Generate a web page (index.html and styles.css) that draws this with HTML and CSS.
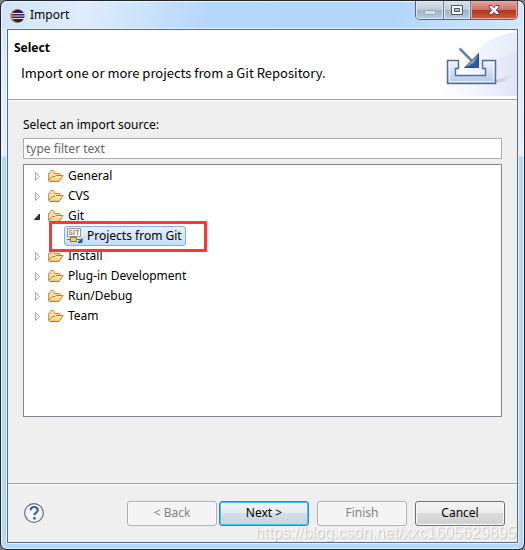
FILE: index.html
```html
<!DOCTYPE html>
<html lang="en">
<head>
  <meta charset="UTF-8">
  <title>Import</title>
  <link rel="stylesheet" href="styles.css">
</head>
<body>
  <!-- shapes shared by the tree rows -->
  <svg class="defs" aria-hidden="true">
    <defs>
      <linearGradient id="folder-front" x1="0" y1="0" x2="0" y2="1">
        <stop offset="0" stop-color="#fff3cd"/>
        <stop offset="1" stop-color="#f3c56c"/>
      </linearGradient>
      <symbol id="folder" viewBox="0 0 16 16">
        <path d="M.5 12V5.500h1.500v-2L3 2.500h2.500l1 1v2h5.500V8" fill="#f9dea0" stroke="#c99549"/>
        <path d="M.5 12.500L4.500 8.500H7l1-1h7L11 13.500H1.500z" fill="url(#folder-front)" stroke="#b87a2b"/>
      </symbol>
      <symbol id="closed" viewBox="0 0 7 9">
        <path d="M1.500 .5v8L5.500 4.500z" fill="#fff" stroke="#a6a6a6"/>
      </symbol>
      <symbol id="open" viewBox="0 0 7 9">
        <path d="M5.500 2v5.500H.5z" fill="#404040" stroke="#262626"/>
      </symbol>
    </defs>
  </svg>

  <div class="window">
    <div class="titlebar">
      <svg class="app-icon" viewBox="0 0 15 14" aria-hidden="true">
        <circle cx="7" cy="7" r="7" fill="#f0922e"/>
        <circle cx="8" cy="7" r="6.500" fill="#2c2255"/>
        <path d="M2 4.500h12M1.500 7h13M2 9.500h12" stroke="#e6e2f3"/>
      </svg>
      <span class="title">Import</span>
      <div class="window-buttons">
        <button class="win-btn minimize" aria-label="Minimize">
          <svg width="12" height="5" viewBox="0 0 12 5"><rect x=".5" y=".5" width="11" height="4" rx="1" fill="#d6e0e9" stroke="#98a8b8"/></svg>
        </button>
        <button class="win-btn maximize" aria-label="Maximize">
          <svg width="12" height="10" viewBox="0 0 12 10"><path d="M.5.5h11v9H.5zM3.500 3.500v3h5v-3z" fill="#fff" fill-rule="evenodd" stroke="#4e5767"/></svg>
        </button>
        <button class="win-btn close" aria-label="Close">
          <svg width="12" height="10" viewBox="0 0 12 10"><path d="M1 .5h3l2 2.200L8 .5h3v1.500L8.300 5l2.700 3v1.500H8L6 7.300 4 9.500H1V8l2.700-3L1 2z" fill="#fff" stroke="#5c4650"/></svg>
        </button>
      </div>
    </div>

    <div class="content">
      <div class="banner">
        <div class="banner-text">
          <h1>Select</h1>
          <p>Import one or more projects from a Git Repository.</p>
        </div>
        <svg class="banner-image" viewBox="0 0 84 66" aria-hidden="true">
          <defs>
            <linearGradient id="sweep" x1="0" y1="0" x2="1" y2="0">
              <stop offset="0" stop-color="#fff"/>
              <stop offset="1" stop-color="#dbe2f5"/>
            </linearGradient>
            <linearGradient id="tray" x1="0" y1="0" x2="0" y2="1">
              <stop offset="0" stop-color="#f0f4fb"/>
              <stop offset="1" stop-color="#b7c5df"/>
            </linearGradient>
            <linearGradient id="shade" x1="0" y1="0" x2="1" y2="0">
              <stop offset="0" stop-color="#b9a9b5"/>
              <stop offset="1" stop-color="#e2e5f4"/>
            </linearGradient>
          </defs>
          <path d="M0 66C30 62 30 8 84 2v64z" fill="url(#sweep)" opacity=".65"/>
          <path d="M20 66C48 60 42 28 84 22v44z" fill="url(#sweep)" opacity=".7"/>
          <circle cx="38" cy="30" r="8" fill="#fffbd7" opacity=".8"/>
          <path d="M63 53V50l17-6-7 7z" fill="url(#shade)" opacity=".55"/>
          <path d="M14.500 30.500h11v8h-3v7h30v-7h-3v-8h13v23h-48z" fill="url(#tray)" stroke="#4871a8" stroke-width="1.500"/>
          <path d="M16.500 32.500h7M16.500 32.500v19h44v-19h-9" fill="none" stroke="#fff" opacity=".8"/>
          <path d="M26.500 18.500l13 13" stroke="#6482b4" stroke-width="2.500"/>
          <path d="M45.500 23.500v14h-14z" fill="#315b99" stroke="#284a80"/>
          <path d="M31.500 37.500L41 33l4.500-9.500-6 6z" fill="#7f9cc8"/>
        </svg>
      </div>

      <div class="main">
        <label for="filter">Select an import source:</label>
        <input class="filter" id="filter" type="text" placeholder="type filter text">
        <ul class="tree">
          <li class="row"><svg class="arrow"><use href="#closed"/></svg><svg class="icon"><use href="#folder"/></svg><span>General</span></li>
          <li class="row"><svg class="arrow"><use href="#closed"/></svg><svg class="icon"><use href="#folder"/></svg><span>CVS</span></li>
          <li>
            <div class="row"><svg class="arrow"><use href="#open"/></svg><svg class="icon"><use href="#folder"/></svg><span>Git</span></div>
            <ul class="children">
              <li class="row selected">
                <svg class="icon" viewBox="0 0 16 16">
                  <rect x=".5" y=".5" width="13" height="8" fill="#f7f8f5" stroke="#9b9c8f"/>
                  <path d="M5 2.500H2.500v4H5V4.500H4" fill="none" stroke="#b98078"/>
                  <path d="M7 2v5" stroke="#7b7b7b"/>
                  <path d="M8.500 2.500H12M10.500 2.500V7" fill="none" stroke="#6ba176"/>
                  <path d="M0 11.500h13" stroke="#7c7044"/>
                  <path d="M3.500 9.500h6v4h-6z" fill="#f2d45c" stroke="#8d7426"/>
                  <path d="M15 10.500V14.500H11z" fill="#27548f" stroke="#27548f"/>
                </svg>
                <span>Projects from Git</span>
              </li>
            </ul>
          </li>
          <li class="row"><svg class="arrow"><use href="#closed"/></svg><svg class="icon"><use href="#folder"/></svg><span>Install</span></li>
          <li class="row"><svg class="arrow"><use href="#closed"/></svg><svg class="icon"><use href="#folder"/></svg><span>Plug-in Development</span></li>
          <li class="row"><svg class="arrow"><use href="#closed"/></svg><svg class="icon"><use href="#folder"/></svg><span>Run/Debug</span></li>
          <li class="row"><svg class="arrow"><use href="#closed"/></svg><svg class="icon"><use href="#folder"/></svg><span>Team</span></li>
        </ul>
      </div>

      <div class="footer">
        <button class="help" aria-label="Help">
          <svg width="20" height="20" viewBox="0 0 20 20">
            <circle cx="10" cy="10" r="9.300" fill="#f4f6fa" stroke="#5f6f91" stroke-width="1.200"/>
            <path d="M6.700 7.200c0-4.300 7-4.300 7 0 0 2.600-3.200 2.400-3.200 5" fill="none" stroke="#4c5f85" stroke-width="2.200"/>
            <circle cx="10.400" cy="15.300" r="1.400" fill="#4c5f85"/>
          </svg>
        </button>
        <div class="actions">
          <button class="btn" disabled>&lt; Back</button>
          <button class="btn default">Next &gt;</button>
        </div>
        <button class="btn" disabled>Finish</button>
        <button class="btn">Cancel</button>
      </div>
    </div>

    <div class="watermark">https://blog.csdn.net/xxc1605629895</div>
  </div>
</body>
</html>
```
FILE: styles.css
```css
*,
*::after {
  box-sizing: border-box;
}

body {
  margin: 0;
  background: #7d7d7d;
  font-family: "Noto Sans", "Open Sans", sans-serif;
  font-size: 12px;
  line-height: 20px;
  color: #000;
}

button,
input {
  font: inherit;
}

h1,
p,
ul {
  margin: 0;
  padding: 0;
}

ul {
  list-style: none;
}

svg {
  display: block;
  flex: none;
}

.defs {
  position: absolute;
  width: 0;
  height: 0;
}

.window {
  position: relative;
  display: flex;
  flex-direction: column;
  min-height: 100vh;
  padding: 0 6px 6px;
  border: 1px solid #20242c;
  border-radius: 7px;
  background: linear-gradient(#d5e7fb, #e4f0fd 155px, #b4d7fb 156px);
  box-shadow: inset 0 0 0 1px #e9f5ff;
}

/* title bar */
.titlebar {
  display: flex;
  align-items: flex-start;
  height: 28px;
  margin: 0 -5px;
  padding: 0 5px 0 8px;
  background: linear-gradient(100deg, #d0e4fa, #dfedfc 16%, #b5d7fb 40%, #b3d6fb 75%, #d5e8fc);
  border-radius: 6px 6px 0 0;
  box-shadow: inset 0 1px #e9f5ff;
}

.app-icon {
  width: 15px;
  height: 14px;
  margin-top: 8px;
}

.title {
  flex: 1;
  margin: 4px 0 0 5px;
}

.window-buttons {
  display: flex;
  border: 1px solid #596579;
  border-top: 0;
  border-radius: 0 0 5px 5px;
  overflow: hidden;
}

.win-btn {
  display: flex;
  align-items: center;
  justify-content: center;
  width: 27px;
  height: 18px;
  padding: 0;
  border: 0;
  border-right: 1px solid #69788b;
  background: linear-gradient(#d9e3ed, #bdcbd9 48%, #9fb2c6 50%, #b9cee2);
  box-shadow: inset 0 0 0 1px #dbe7f2;
}

.minimize {
  width: 28px;
  padding-top: 5px;
}

.close {
  width: 46px;
  border-right: 0;
  background: linear-gradient(#e5a79c, #cf7365 48%, #b5331c 50%, #d05d40);
  box-shadow: inset 0 0 0 1px #e9aa9c;
}

/* dialog body */
.content {
  flex: 1;
  display: flex;
  flex-direction: column;
  border: 1px solid #5c6b7b;
  background: #efefef;
  box-shadow: 0 0 0 1px #e3f1ff;
}

.banner {
  display: flex;
  justify-content: space-between;
  height: 70px;
  border-bottom: 1px solid #a0a0a0;
  background: #fff;
}

.banner-text {
  padding: 8px 0 0 6px;
}

.banner h1 {
  font-size: 12px;
  line-height: 20px;
}

.banner p {
  margin-top: 5px;
  padding-left: 7px;
  font-family: "Noto Sans CJK SC", "Noto Sans", sans-serif;
  font-size: 13px;
}

.banner-image {
  width: 84px;
  height: 66px;
}

.main {
  flex: 1;
  display: flex;
  flex-direction: column;
  padding: 14px 15px 66px;
  border-top: 1px solid #fff;
}

.filter {
  width: 100%;
  height: 21px;
  margin: 3px 0 5px;
  padding: 0 2px;
  border: 1px solid #abadb3;
  border-radius: 0;
  background: #fff;
}

.filter::placeholder {
  color: #666;
}

.tree {
  flex: 1;
  padding: 1px 0 1px 10px;
  border: 1px solid #828790;
  background: #fff;
}

.row {
  display: flex;
  align-items: center;
  height: 20px;
}

.arrow {
  width: 7px;
  height: 9px;
  margin-right: 7px;
}

.icon {
  width: 16px;
  height: 16px;
  margin-right: 4px;
}

/* red frame around the entry to pick */
.children {
  position: relative;
  padding-left: 30px;
}

.children::after {
  content: "";
  position: absolute;
  top: -5px;
  left: 15px;
  width: 158px;
  height: 31px;
  border: 3px solid #fb3839;
}

.selected {
  width: max-content;
  padding: 0 3px 0 2px;
  border: 1px solid #84acdd;
  border-radius: 3px;
  background: linear-gradient(#e9f2fd, #c4dcfa);
}

/* buttons */
.footer {
  display: flex;
  align-items: center;
  gap: 8px;
  height: 59px;
  padding: 0 12px 0 16px;
  border-top: 1px solid #a0a0a0;
  box-shadow: inset 0 1px #fff;
}

.help {
  margin-right: auto;
  padding: 0;
  border: 0;
  background: none;
}

.actions {
  display: flex;
  gap: 2px;
}

.btn {
  width: 90px;
  height: 25px;
  padding: 0;
  border: 1px solid #707070;
  border-radius: 3px;
  background: linear-gradient(#f3f3f3, #ebebeb 48%, #dddddd 50%, #cfcfcf);
  box-shadow: inset 0 0 0 1px #fafafa;
  color: #000;
}

.btn:disabled {
  border-color: #adb2b5;
  background: #f4f4f4;
  color: #838383;
}

.btn.default {
  border-color: #3c7fb1;
  background: linear-gradient(#f1f4f6, #e4ebef 48%, #d2dee6 50%, #c7d5de);
  box-shadow: inset 0 0 0 1px #37cdf8;
}

.watermark {
  position: absolute;
  right: 8px;
  bottom: 6px;
  font-family: "Liberation Sans", Arial, sans-serif;
  font-size: 16px;
  color: rgba(255, 255, 255, 0.7);
  text-shadow: 1px 1px 1px rgba(0, 0, 0, 0.18);
  pointer-events: none;
}
```
